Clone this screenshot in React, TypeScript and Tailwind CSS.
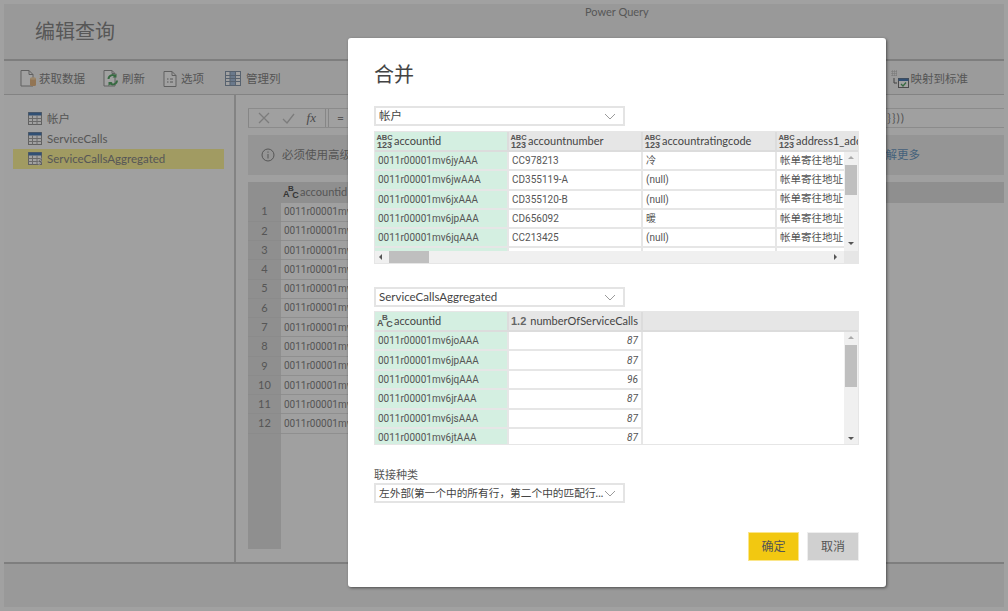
const FONT = "font-['Lato','Noto_Sans_CJK_SC',sans-serif]";
const CELLFONT = "font-['Roboto','Noto_Sans_CJK_SC',sans-serif] text-[10px]";

function TableIcon({ lightning = false, faded = false }: { lightning?: boolean; faded?: boolean }) {
  return (
    <svg width="16" height="14" viewBox="0 0 16 14" className="shrink-0">
      <rect x="0.5" y="0.5" width="13" height="12" fill="#fff" stroke="#9a9a9a" />
      <rect x="0.5" y="0.5" width="13" height="3" fill={faded ? "#6f8fb5" : "#4f7fb8"} />
      <path d="M0.5 6.5H13.5M0.5 9.5H13.5M4.5 3.5V12.5M9 3.5V12.5" stroke="#a8a8a8" fill="none" />
      {lightning && <path d="M13 6l-3 4h2l-1.500 3.500 3.500-4.500h-2l1.500-3z" fill="#777" stroke="#fff" strokeWidth="0.5" />}
    </svg>
  );
}

function Abc123() {
  return (
    <span className="inline-flex w-[15px] shrink-0 flex-col items-center font-['Liberation_Sans',sans-serif] font-bold text-[#555]">
      <span className="h-[7px] text-[7.500px] leading-[7px]">ABC</span>
      <span className="h-[8px] text-[9px] leading-[8px]">123</span>
    </span>
  );
}

function AbcType() {
  return (
    <span className="flex h-[16px] w-[15px] shrink-0 font-['Liberation_Sans',sans-serif] text-[9px] font-bold leading-none text-[#555]">
      <span className="mt-[6px]">A</span>
      <span className="-ml-[1.500px] mt-[1px] text-[8px]">B</span>
      <span className="-ml-[1.500px] mt-[7px]">C</span>
    </span>
  );
}

function Chevron() {
  return (
    <svg width="12" height="7" viewBox="0 0 12 7" className="shrink-0">
      <path d="M1 1l5 5 5-5" fill="none" stroke="#9a9a9a" />
    </svg>
  );
}

function Select({ text }: { text: string }) {
  return (
    <div className="flex h-[20px] w-[251px] items-center justify-between border-2 border-[#e4e4e4] pl-[3px] pr-[7px] text-[11.500px] text-[#444]">
      <span className="whitespace-nowrap">{text}</span>
      <Chevron />
    </div>
  );
}

function Arrow({ dir }: { dir: "up" | "down" | "left" | "right" }) {
  const d = { up: "M1 4l3-3 3 3z", down: "M1 1l3 3 3-3z", left: "M4 1l-3 3 3 3z", right: "M1 1l3 3-3 3z" }[dir];
  return (
    <svg width="8" height="8" viewBox="0 0 8 8" className="shrink-0">
      <path d={d} fill={dir === "up" ? "#aaa" : "#555"} />
    </svg>
  );
}

function VScroll({ height, bottom }: { height: string; bottom: string }) {
  return (
    <div className="flex w-[14px] shrink-0 flex-col items-center bg-[#f0f0f0] pt-[3px]">
      <Arrow dir="up" />
      <div className={`mt-[2px] w-[12px] bg-[#bfbfbf] ${height}`} />
      <div className="flex-1" />
      <div className={bottom}><Arrow dir="down" /></div>
    </div>
  );
}

function Cell({ w, green, right, italic, children }: { w: string; green?: boolean; right?: boolean; italic?: boolean; children?: React.ReactNode }) {
  return (
    <div
      className={`flex h-full shrink-0 items-center overflow-hidden whitespace-nowrap border-b-2 border-r-2 border-[#e6e6e6] px-[3px] ${w} ${green ? "bg-[#d4efe1]" : "bg-white"} ${right ? "justify-end" : ""} ${italic ? "italic" : ""}`}
    >
      {children}
    </div>
  );
}

const t1 = [
  ["0011r00001mv6jyAAA", "CC978213", "冷"],
  ["0011r00001mv6jwAAA", "CD355119-A", "(null)"],
  ["0011r00001mv6jxAAA", "CD355120-B", "(null)"],
  ["0011r00001mv6jpAAA", "CD656092", "暖"],
  ["0011r00001mv6jqAAA", "CC213425", "(null)"],
  ["", "", ""],
];
const t2 = [
  ["0011r00001mv6joAAA", "87"],
  ["0011r00001mv6jpAAA", "87"],
  ["0011r00001mv6jqAAA", "96"],
  ["0011r00001mv6jrAAA", "87"],
  ["0011r00001mv6jsAAA", "87"],
  ["0011r00001mv6jtAAA", "87"],
];

function Head({ w, green, children }: { w: string; green?: boolean; children?: React.ReactNode }) {
  return (
    <div className={`flex h-full shrink-0 items-center gap-[2px] overflow-hidden whitespace-nowrap border-b-2 border-r-2 border-[#dcdcdc] pl-[2px] ${w} ${green ? "bg-[#d4efe1]" : "bg-[#e6e6e6]"}`}>
      {children}
    </div>
  );
}

function TopTable() {
  return (
    <div className="mt-[5px] flex h-[133px] w-[485px] flex-col overflow-hidden border border-[#e6e6e6] text-[#555]">
      <div className="flex h-[20px] shrink-0 text-[11px] text-[#444]">
        <Head w="w-[134px]" green><Abc123 /><span>accountid</span></Head>
        <Head w="w-[134px]"><Abc123 /><span>accountnumber</span></Head>
        <Head w="w-[134px]"><Abc123 /><span>accountratingcode</span></Head>
        <div className="flex h-full flex-1 items-center gap-[2px] overflow-hidden whitespace-nowrap border-b-2 border-[#dcdcdc] bg-[#e6e6e6] pl-[2px]"><Abc123 /><span>address1_addresstypecode</span></div>
      </div>
      <div className="flex h-[99px] shrink-0">
        <div className={`flex-1 overflow-hidden ${CELLFONT}`}>
          {t1.map((r, i) => (
            <div key={i} className="flex h-[19.300px]">
              <Cell w="w-[134px]" green>{r[0]}</Cell>
              <Cell w="w-[134px]">{r[1]}</Cell>
              <Cell w="w-[134px]">{r[2]}</Cell>
              <div className="flex h-full flex-1 items-center overflow-hidden whitespace-nowrap border-b-2 border-[#e6e6e6] bg-white px-[3px] text-[10.500px]">{r[0] ? "帐单寄往地址" : ""}</div>
            </div>
          ))}
        </div>
        <VScroll height="h-[30px]" bottom="pb-[2px]" />
      </div>
      <div className="flex flex-1 items-center bg-[#f0f0f0]">
        <div className="flex flex-1 items-center pl-[3px] pr-[3px]">
          <Arrow dir="left" />
          <div className="ml-[3px] h-[12px] w-[40px] bg-[#bfbfbf]" />
          <div className="flex-1" />
          <Arrow dir="right" />
        </div>
        <div className="h-full w-[14px] bg-[#e6e6e6]" />
      </div>
    </div>
  );
}

function BottomTable() {
  return (
    <div className="mt-[4px] flex h-[134px] w-[485px] flex-col overflow-hidden border border-[#e6e6e6] text-[#555]">
      <div className="flex h-[20px] shrink-0 text-[11px] text-[#444]">
        <Head w="w-[134px]" green><AbcType /><span>accountid</span></Head>
        <Head w="w-[134px]">
          <span className="mr-[2px] font-['Liberation_Sans',sans-serif] text-[11px] font-bold text-[#666]">1.2</span>
          <span>numberOfServiceCalls</span>
        </Head>
        <div className="h-full flex-1 border-b-2 border-[#dcdcdc] bg-[#e6e6e6]" />
      </div>
      <div className="flex flex-1">
        <div className={`flex-1 overflow-hidden ${CELLFONT}`}>
          {t2.map((r) => (
            <div key={r[0]} className="flex h-[19.400px]">
              <Cell w="w-[134px]" green>{r[0]}</Cell>
              <Cell w="w-[134px]" right italic>{r[1]}</Cell>
              <div className="h-full flex-1 bg-white" />
            </div>
          ))}
        </div>
        <VScroll height="h-[42px]" bottom="pb-[4px]" />
      </div>
    </div>
  );
}

function Dialog() {
  return (
    <div className="absolute left-[348px] top-[38px] h-[549px] w-[538px] rounded-[3px] bg-white pl-[26px] pt-[22px] text-[#444] shadow-[1px_1px_3px_rgba(0,0,0,0.5)]">
      <div className="h-[28px] text-[20px] leading-[28px] text-[#444]">合并</div>
      <div className="mt-[18px]"><Select text="帐户" /></div>
      <TopTable />
      <div className="mt-[23px]"><Select text="ServiceCallsAggregated" /></div>
      <BottomTable />
      <div className="mt-[22px] h-[16px] text-[11px] leading-[16px] text-[#555]">联接种类</div>
      <div className="[&_span]:text-[10.700px]"><Select text="左外部(第一个中的所有行，第二个中的匹配行..." /></div>
      <div className="mt-[29px] flex w-[485px] justify-end gap-[8px] text-[12px]">
        <button className="h-[29px] w-[51px] border border-[#fbe68a] bg-[#f2c811] pt-[1px] text-[#555]">确定</button>
        <button className="h-[29px] w-[52px] border border-[#eeeeee] bg-[#d0d0d0] pt-[1px] text-[#555]">取消</button>
      </div>
    </div>
  );
}

function ToolButton({ icon, label, cls }: { icon: React.ReactNode; label: string; cls?: string }) {
  return (
    <div className={`flex items-center gap-[2px] ${cls ?? ""}`}>
      {icon}
      <span>{label}</span>
    </div>
  );
}

const GetData = (
  <svg width="17" height="17" viewBox="0 0 17 17"><path d="M1 .5h8l4 4v11.500H1z" fill="#fff" stroke="#999" /><path d="M9 .5v4h4" fill="none" stroke="#999" /><rect x="10" y="8" width="6" height="8" rx="1.500" fill="#e8b985" /><ellipse cx="13" cy="8.500" rx="3" ry="1.200" fill="#f5d5a8" /></svg>
);
const Refresh = (
  <svg width="17" height="17" viewBox="0 0 17 17"><path d="M1 .5h8l3 3v12.500H1z" fill="#fff" stroke="#999" /><path d="M9 .5v3h3" fill="none" stroke="#999" /><path d="M5.500 9a4 4 0 0 1 7-2.500M14 10.500a4 4 0 0 1-7 2.500" fill="none" stroke="#58a868" strokeWidth="2" /><path d="M13.500 3.500v4h-4zM5.500 16v-4h4z" fill="#58a868" /></svg>
);
const Options = (
  <svg width="16" height="16" viewBox="0 0 16 16"><path d="M1 .5h8l4 4v11H1z" fill="#fff" stroke="#999" /><path d="M9 .5v4h4" fill="none" stroke="#999" /><path d="M4 8h1.500M7 8h3M4 11h1.500M7 11h3" stroke="#888" /></svg>
);
const Columns = (
  <svg width="19" height="15" viewBox="0 0 19 15"><rect x=".5" y=".5" width="15" height="14" fill="#fff" stroke="#8a9bb0" /><rect x="5" y="1" width="5.500" height="13" fill="#a9c0de" /><path d="M.5 4.500h15M.5 7.500h15M.5 10.500h15M5 .5v14M10.500 .5v14" stroke="#8a9bb0" fill="none" /></svg>
);
const MapIcon = (
  <svg width="18" height="18" viewBox="0 0 18 18"><path d="M1 1h5M1 3h5M1 5h5M1 1v5M3 1v5M5 1v5" stroke="#bbb" strokeDasharray="1 1" /><path d="M3 8v5h3" fill="none" stroke="#666" /><rect x="7.500" y="8.500" width="10" height="9" fill="#fff" stroke="#777" /><rect x="7.500" y="8.500" width="10" height="2.500" fill="#4f7fb8" /><path d="M10 14l2 2 3-3.500" fill="none" stroke="#58a868" strokeWidth="1.300" /></svg>
);

function RightPane() {
  return (
    <div className="flex min-w-0 flex-1 flex-col pl-[12px] pr-0 pt-[13px]">
      <div className="flex h-[20px] shrink-0 border-y border-[#dcdcdc]">
        <div className="flex w-[78px] items-center justify-between border-x border-[#d4d4d4] px-[9px]">
          <svg width="12" height="12" viewBox="0 0 12 12"><path d="M1 1l10 10M11 1L1 11" stroke="#c4c4c4" strokeWidth="1.300" /></svg>
          <svg width="13" height="11" viewBox="0 0 13 11"><path d="M1 6l4 4 7-9" fill="none" stroke="#c4c4c4" strokeWidth="1.300" /></svg>
          <span className="font-['Liberation_Serif',serif] text-[13px] italic text-[#777]">fx</span>
        </div>
        <div className="ml-[2px] flex flex-1 items-center justify-between border-l border-[#d4d4d4] pl-[8px] pr-[99px] text-[12px] text-[#888]">
          <span>=</span>
          <span className="tracking-[1px]">{"}}))"}</span>
        </div>
      </div>
      <div className="mt-[7px] flex h-[40px] shrink-0 items-center justify-between bg-[#ececec] pl-[13px] pr-[84px] text-[11.500px]">
        <div className="flex items-center gap-[7px] text-[#888]">
          <svg width="14" height="14" viewBox="0 0 14 14"><circle cx="7" cy="7" r="6" fill="none" stroke="#888" /><path d="M7 6v4.500M7 3.500v1.200" stroke="#888" /></svg>
          <span>必须使用高级查询编辑器</span>
        </div>
        <span className="text-[#6c9bc4]">了解更多</span>
      </div>
      <div className="mt-[7px] flex min-h-0 w-full flex-1 text-[#888]">
        <div className="flex w-[33px] shrink-0 flex-col bg-[#e3e3e3] text-center text-[11px] text-[#888]">
          <div className="h-[20.500px] shrink-0" />
          {Array.from({ length: 12 }, (_, i) => (
            <div key={i} className="flex h-[19.270px] shrink-0 items-center justify-center border-b border-[#dcdcdc]">{i + 1}</div>
          ))}
        </div>
        <div className="flex min-w-0 flex-1 flex-col">
          <div className="flex h-[20.500px] shrink-0 items-center gap-[2px] bg-[#e3e3e3] pl-[2px] text-[11px]">
            <AbcType />
            <span>accountid</span>
          </div>
          {Array.from({ length: 12 }, (_, i) => (
            <div key={i} className={`flex h-[19.270px] w-[134px] shrink-0 items-center border-b border-[#e3e3e3] pl-[3px] ${CELLFONT}`}>0011r00001mv6jyAAA</div>
          ))}
        </div>
      </div>
      <div className="h-[13px] shrink-0" />
    </div>
  );
}

export default function App() {
  return (
    <div className={`relative h-[611px] w-[1008px] overflow-hidden bg-white p-[4px] pb-[4px] ${FONT}`}>
      <div className="flex h-[603px] w-[1000px] flex-col bg-[#fdfdfd]">
        <div className="relative h-[57px] shrink-0 border-b-2 border-[#c8c8c8] bg-[#f3f3f3] pl-[31px] pt-[11px]">
          <div className="text-[20px] leading-[32px] text-[#8a8a8a]">编辑查询</div>
          <div className="absolute left-[581px] top-0 text-[11px] leading-[15px] text-[#8a8a8a]">Power Query</div>
        </div>
        <div className="flex h-[34px] shrink-0 items-center border-b border-[#d0d0d0] bg-[#f6f6f6] pl-[16px] pt-[2px] text-[11.500px] text-[#888]">
          <ToolButton icon={GetData} label="获取数据" />
          <ToolButton icon={Refresh} label="刷新" cls="ml-[18px]" />
          <ToolButton icon={Options} label="选项" cls="ml-[18px]" />
          <ToolButton icon={Columns} label="管理列" cls="ml-[21px]" />
          <div className="flex-1" />
          <ToolButton icon={MapIcon} label="映射到标准" cls="mr-[36px]" />
        </div>
        <div className="flex min-h-0 flex-1">
          <div className="w-[232px] shrink-0 border-r-2 border-[#d0d0d0] pl-[9px] pr-[10px] pt-[14px] text-[11.500px] text-[#888]">
            <div className="flex h-[20px] items-center gap-[3px] pl-[15px]"><TableIcon /><span>帐户</span></div>
            <div className="flex h-[20px] items-center gap-[3px] pl-[15px]"><TableIcon /><span>ServiceCalls</span></div>
            <div className="flex h-[20px] items-center gap-[3px] bg-[#fff59b] pl-[15px] text-[#8a8a8a]"><TableIcon lightning /><span>ServiceCallsAggregated</span></div>
          </div>
          <RightPane />
        </div>
        <div className="h-[45px] shrink-0 border-t-2 border-[#c8c8c8] bg-[#f3f3f3]" />
      </div>
      <div className="absolute inset-0 bg-black/37" />
      <Dialog />
    </div>
  );
}
